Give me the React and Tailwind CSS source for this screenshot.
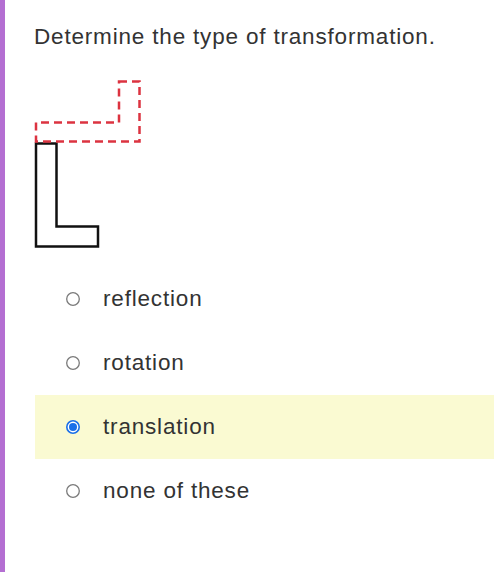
import React from "react";

const options = [
  { label: "reflection", checked: false },
  { label: "rotation", checked: false },
  { label: "translation", checked: true },
  { label: "none of these", checked: false },
];

function Radio({ checked }) {
  return (
    <svg width="14" height="14" viewBox="0 0 14 14" className="block shrink-0">
      {checked ? (
        <>
          <circle cx="7" cy="7" r="6.2" fill="#ffffff" stroke="#1a6fe8" strokeWidth="1.6" />
          <circle cx="7" cy="7" r="4" fill="#1a6fe8" />
        </>
      ) : (
        <circle cx="7" cy="7" r="6.3" fill="#ffffff" stroke="#7a7a7a" strokeWidth="1.3" />
      )}
    </svg>
  );
}

export default function App() {
  return (
    <div
      className="flex min-h-[572px] w-[494px] bg-white text-[#333333]"
      style={{ fontFamily: '"Liberation Sans", Arial, sans-serif' }}
    >
      <div className="w-[5px] shrink-0 bg-[#b46fd2]" />
      <div className="flex flex-1 flex-col pl-[29px] pt-[23px]">
        <p className="whitespace-nowrap text-[22.5px] leading-[28px] tracking-[0.82px]">
          Determine the type of transformation.
        </p>
        <svg
          className="ml-[-4px] mt-[25px] block"
          width="120"
          height="176"
          viewBox="30 76 120 176"
        >
          <polygon
            points="36,143.5 56.5,143.5 56.5,226.5 98,226.5 98,246.5 36,246.5"
            fill="none"
            stroke="#111111"
            strokeWidth="2.5"
          />
          <polygon
            points="119,81.5 139.5,81.5 139.5,141.5 36,141.5 36,122.5 119,122.5"
            fill="none"
            stroke="#dc3340"
            strokeWidth="2.5"
            strokeDasharray="8 5"
          />
        </svg>
        <div className="mt-[15px] flex flex-col">
          {options.map((o) => (
            <div
              key={o.label}
              className={`ml-[1px] flex h-16 items-center gap-[23px] pl-[31px] ${
                o.checked ? "bg-[#fafad2]" : ""
              }`}
            >
              <Radio checked={o.checked} />
              <span className="text-[22.5px] leading-[28px] tracking-[0.82px]">
                {o.label}
              </span>
            </div>
          ))}
        </div>
      </div>
    </div>
  );
}
